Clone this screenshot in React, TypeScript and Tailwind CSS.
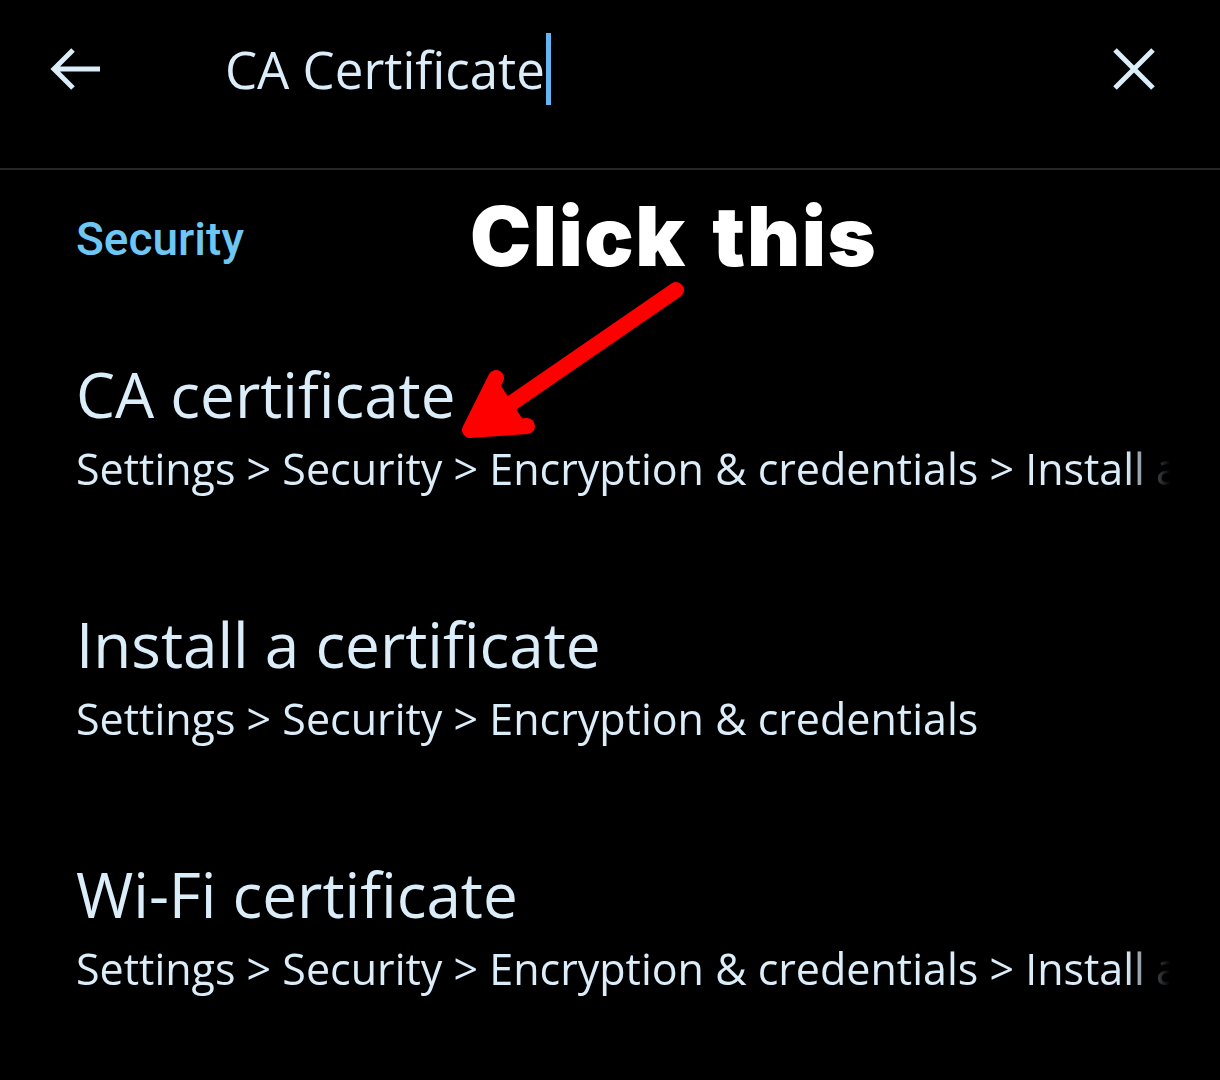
import React from 'react'

const items = [
  { title: 'CA certificate', path: 'Settings > Security > Encryption & credentials > Install a certificate' },
  { title: 'Install a certificate', path: 'Settings > Security > Encryption & credentials' },
  { title: 'Wi-Fi certificate', path: 'Settings > Security > Encryption & credentials > Install a certificate' },
]

export default function App() {
  return (
    <div className="relative w-[1220px] h-[1080px] bg-black overflow-hidden font-['Open_Sans',sans-serif] text-[#dcedfa]">
      {/* search bar */}
      <div className="flex items-center h-[170px] pl-[50px] pr-[64px] pb-[30px] border-b-2 border-[#262626]">
        <svg width="52" height="44" viewBox="0 0 52 44" className="text-[#dcedfa]">
          <path d="M50 22H4M23 3L4 22l19 19" fill="none" stroke="currentColor" strokeWidth="5" />
        </svg>
        <div className="ml-[123px] flex items-center flex-1 text-[51px] leading-none">
          <span>CA Certificate</span>
          <span className="w-[5px] h-[72px] bg-[#64b5f0] ml-[1px]" />
        </div>
        <svg width="44" height="44" viewBox="0 0 44 44" className="text-[#dcedfa]">
          <path d="M3 3l38 38M41 3L3 41" fill="none" stroke="currentColor" strokeWidth="5" />
        </svg>
      </div>

      <div className="pl-[76px] pr-[50px]">
        <div className="pt-[46px] text-[46px] font-medium text-[#6ec6f4] font-['Roboto',sans-serif] leading-none">Security</div>

        <div className="mt-[101px] flex flex-col gap-[116px]">
          {items.map((it) => (
            <div key={it.title} className="flex flex-col gap-[16px]">
              <div className="text-[62px] leading-none">{it.title}</div>
              <div className="text-[43px] leading-[1.3] whitespace-nowrap overflow-hidden [mask-image:linear-gradient(to_right,black_calc(100%-44px),transparent)]">
                {it.path}
              </div>
            </div>
          ))}
        </div>
      </div>

      {/* annotation */}
      <div className="absolute left-[470px] top-[196px] text-[82px] font-black text-white font-['Inter',sans-serif] leading-none tracking-[1.5px] [word-spacing:8px]">
        Click this
      </div>
      <svg className="absolute left-0 top-0" width="1220" height="1080">
        <path d="M676 290 L490 418" stroke="#ff0000" strokeWidth="16" strokeLinecap="round" fill="none" />
        <path d="M496 378 L470 430 L527 426" stroke="#ff0000" strokeWidth="16" strokeLinecap="round" strokeLinejoin="round" fill="#ff0000" />
      </svg>
    </div>
  )
}
